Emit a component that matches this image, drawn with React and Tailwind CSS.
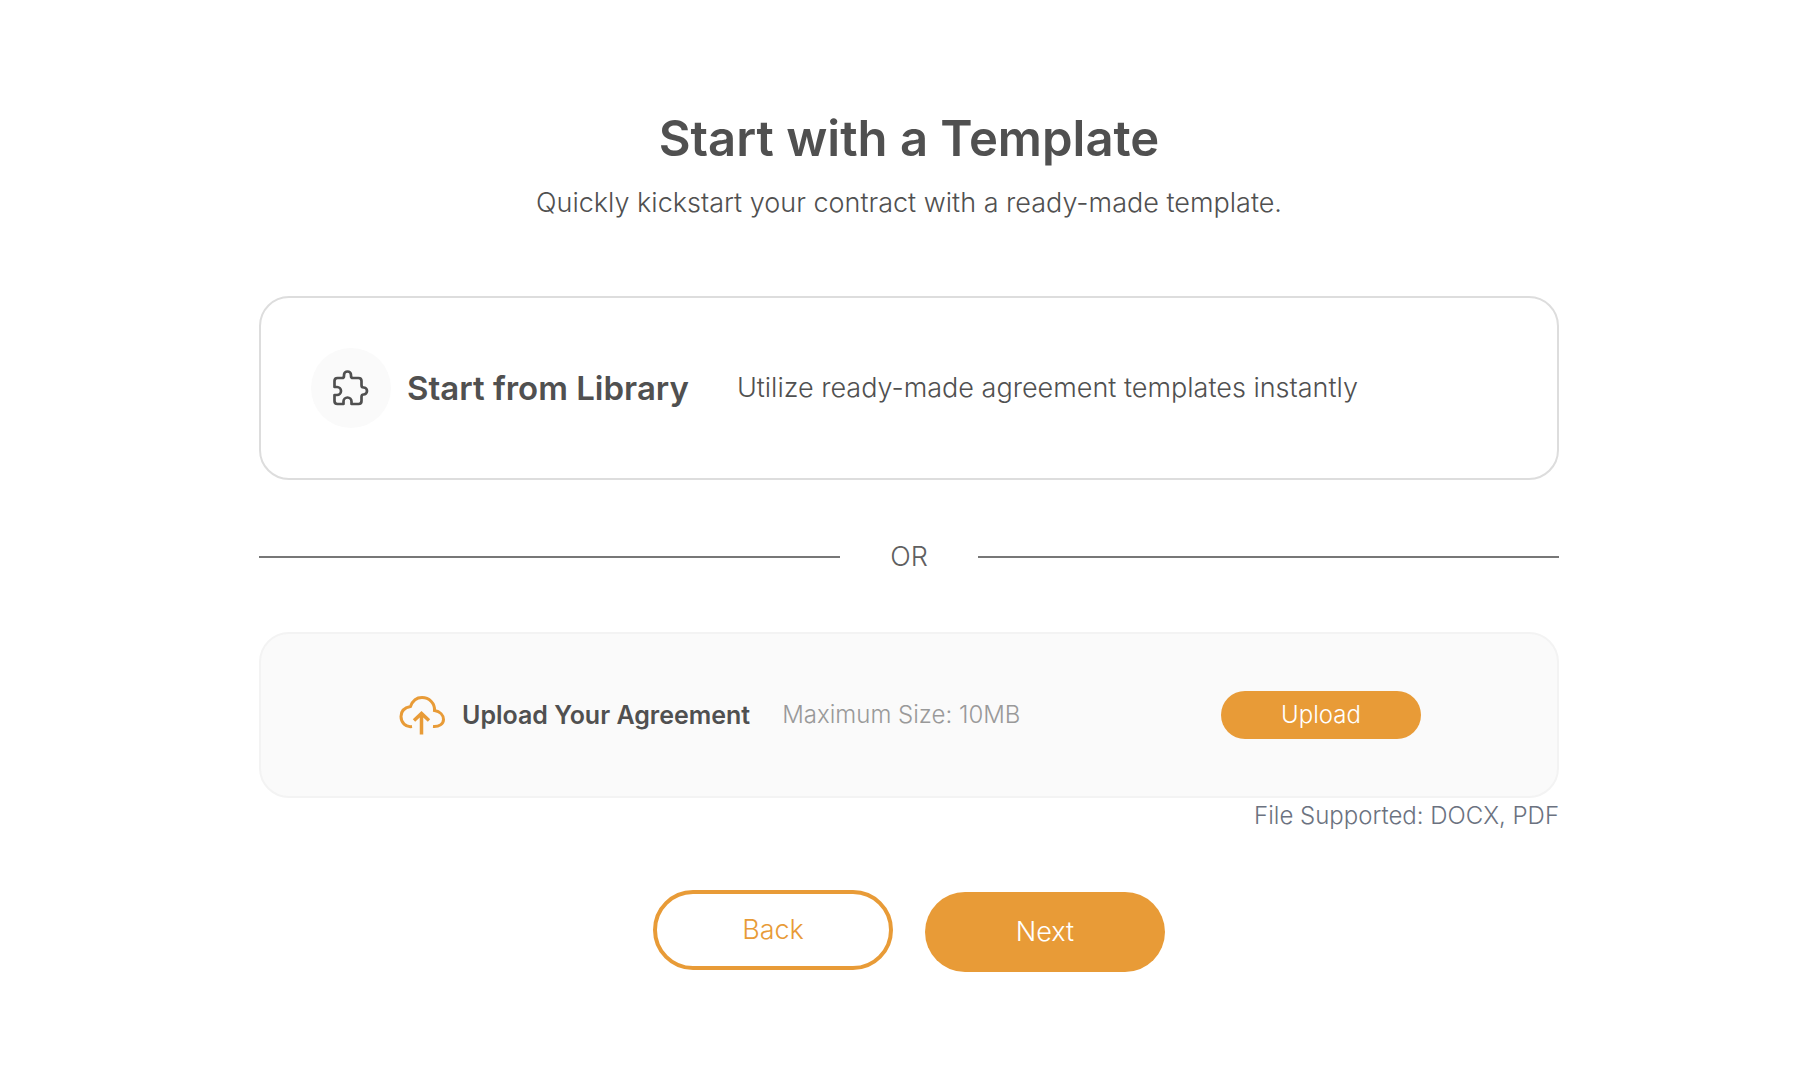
import React, { useRef } from 'react';

const PuzzleIcon = () => (
  <svg className="w-10 h-10" viewBox="0 0 40 40" fill="none" stroke="currentColor" strokeWidth="2.7" strokeLinejoin="round" aria-hidden="true">
    <path d="M6.500 10H11Q13 10 13 8V7A3.500 3.500 0 0 1 20 7V8Q20 10 22 10H27.500Q30.500 10 30.500 13V17Q30.500 19.500 32.500 19.500A3.500 3.500 0 0 1 32.500 26.500Q30.500 26.500 30.500 29V33Q30.500 36 27.500 36H20.500V33.500A4 4 0 0 0 12.500 33.500V36H6.500Q3.500 36 3.500 33V27H6A4 4 0 0 0 6 19H3.500V13Q3.500 10 6.500 10Z" />
  </svg>
);

const CloudUploadIcon = () => (
  <svg className="w-12 h-10" viewBox="0 0 48 40" fill="none" stroke="currentColor" strokeWidth="3" aria-hidden="true">
    <path d="M14 31.500C7.500 32.500 3 27.500 3 21.500C3 16 7 12.500 12.500 11.500C14.500 6 18.500 2.500 24 2.500C31 2.500 37 8 36.500 15.500C42 16.500 45.500 20 45.500 24.500C45.500 29 41 32 35 31.500" />
    <path d="M23.500 39.500V18.500M16 25.500L23.500 18.500L31 25.500" strokeWidth="3.500" />
  </svg>
);

function App() {
  const fileInput = useRef(null);

  return (
    <main className="min-h-screen bg-white pt-[109px] pb-16 pl-[18px] font-['Inter',sans-serif] text-[#505050]">
      <div className="w-full max-w-[1300px] mx-auto">
        <header className="text-center">
          <h1 className="text-[49px] leading-[60px] font-semibold">Start with a Template</h1>
          <p className="mt-[18px] text-[27px] leading-8 font-light text-[#505050]">Quickly kickstart your contract with a ready-made template.</p>
        </header>

        <section className="mt-[77px] h-[184px] flex items-center px-[50px] border-2 border-[#ddd] rounded-[30px]">
          <div className="w-20 h-20 shrink-0 flex items-center justify-center rounded-full bg-[#fafafa]">
            <PuzzleIcon />
          </div>
          <h2 className="ml-4 text-[33px] leading-10 font-semibold">Start from Library</h2>
          <p className="ml-12 text-[27px] leading-8 font-light text-[#505050]">Utilize ready-made agreement templates instantly</p>
        </section>

        <div className="mt-[61px] flex items-center">
          <span className="flex-1 h-[2px] bg-[#777]" />
          <span className="w-[138px] text-center text-[27px] leading-8 font-light text-[#606060]">OR</span>
          <span className="flex-1 h-[2px] bg-[#777]" />
        </div>

        <section className="mt-[59px] h-[166px] flex items-center pl-[137px] pr-[136px] bg-[#fafafa] border-2 border-[#f3f3f3] rounded-[30px]">
          <span className="text-[#e89b37]"><CloudUploadIcon /></span>
          <h3 className="ml-4 text-[25px] leading-8 font-semibold">Upload Your Agreement</h3>
          <p className="ml-8 text-[24px] leading-8 font-light text-[#999]">Maximum Size: 10MB</p>
          <input ref={fileInput} type="file" accept=".docx,.pdf" aria-label="Agreement file" className="hidden" />
          <button
            type="button"
            onClick={() => fileInput.current.click()}
            className="ml-auto w-[200px] h-12 rounded-full bg-[#e89b37] text-white text-[24px] leading-8 font-light"
          >
            Upload
          </button>
        </section>
        <p className="mt-[2px] text-right text-[24px] leading-8 font-light text-[#6b7280]">File Supported: DOCX, PDF</p>

        <div className="mt-[58px] flex justify-center items-start gap-8">
          <button type="button" className="w-[240px] h-20 rounded-full border-4 border-[#e89b37] text-[#e89b37] text-[27px] leading-8 font-light">Back</button>
          <button type="button" className="mt-[2px] w-[240px] h-20 rounded-full bg-[#e89b37] text-white text-[27px] leading-8 font-light">Next</button>
        </div>
      </div>
    </main>
  );
}

export default App;
